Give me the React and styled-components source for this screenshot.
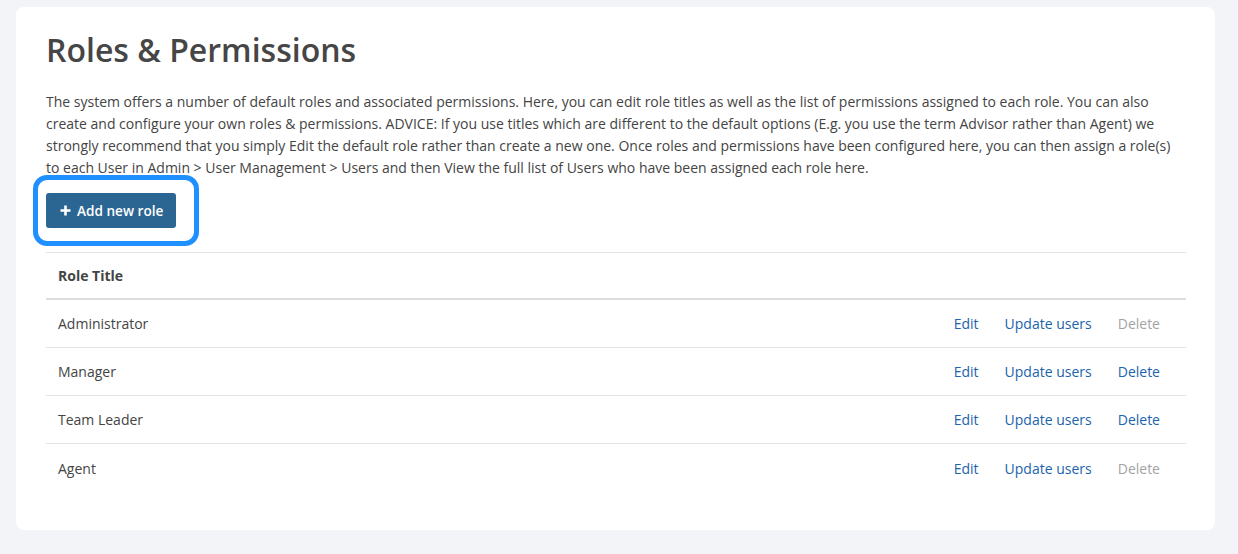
import React from "react";
import styled, { createGlobalStyle } from "styled-components";

const Global = createGlobalStyle`
  html, body { margin: 0; padding: 0; background: #f3f4f8; }
  body { font-family: "Open Sans", "Liberation Sans", sans-serif; color: #444; }
  * { box-sizing: border-box; }
`;

const Page = styled.div`
  padding: 7px 23px 24px 16px;
`;

const Card = styled.div`
  background: #fff;
  border-radius: 8px;
  padding: 24px 29px 38px 30px;
`;

const Title = styled.h1`
  margin: 0;
  font-size: 32px;
  font-weight: 600;
  color: #464646;
  line-height: 38px;
`;

const Intro = styled.p`
  margin: 22px 0 0;
  font-size: 14px;
  line-height: 22px;
  color: #444;
  padding-right: 10px;
`;

const ButtonWrap = styled.div`
  position: relative;
  display: inline-block;
  margin-top: 14px;
`;

const Highlight = styled.span`
  position: absolute;
  left: -13px;
  top: -18px;
  right: -23px;
  bottom: -18px;
  border: 5px solid #1e90ff;
  border-radius: 14px;
  pointer-events: none;
`;

const PrimaryButton = styled.button`
  display: flex;
  align-items: center;
  gap: 6px;
  height: 35px;
  padding: 0 13px 0 14px;
  background: #2b6592;
  color: #fff;
  border: none;
  border-radius: 3px;
  font-family: inherit;
  font-size: 13.6px;
  font-weight: 600;
  cursor: pointer;
`;

const Table = styled.div`
  margin-top: 24px;
  border-top: 1px solid #e2e2e2;
`;

const HeaderRow = styled.div`
  display: flex;
  align-items: center;
  height: 47px;
  padding: 0 12px;
  border-bottom: 2px solid #dddddd;
  font-size: 14px;
  font-weight: 700;
  color: #444;
`;

const Row = styled.div`
  display: flex;
  align-items: center;
  height: 48px;
  padding: 0 26px 0 12px;
  border-bottom: ${(p) => (p.$last ? "none" : "1px solid #e2e2e2")};
  font-size: 14px;
  color: #444;
`;

const Name = styled.div`
  flex: 1;
`;

const Actions = styled.div`
  display: flex;
  gap: 26px;
`;

const Action = styled.a`
  color: ${(p) => (p.$disabled ? "#a3a3a3" : "#1b63ad")};
  text-decoration: none;
  cursor: ${(p) => (p.$disabled ? "default" : "pointer")};
`;

const PlusIcon = () => (
  <svg width="11" height="11" viewBox="0 0 11 11" aria-hidden="true">
    <path d="M5.5 0.5v10M0.5 5.5h10" stroke="#fff" strokeWidth="2.6" />
  </svg>
);

const roles = [
  { name: "Administrator", canDelete: false },
  { name: "Manager", canDelete: true },
  { name: "Team Leader", canDelete: true },
  { name: "Agent", canDelete: false },
];

export default function App() {
  return (
    <>
      <Global />
      <Page>
        <Card>
          <Title>Roles &amp; Permissions</Title>
          <Intro>
            The system offers a number of default roles and associated permissions. Here, you can edit role titles as well as the list of permissions assigned to each role. You can also create and configure your own roles &amp; permissions. ADVICE: If you use titles which are different to the default options (E.g. you use the term Advisor rather than Agent) we strongly recommend that you simply Edit the default role rather than create a new one. Once roles and permissions have been configured here, you can then assign a role(s) to each User in Admin &gt; User Management &gt; Users and then View the full list of Users who have been assigned each role here.
          </Intro>
          <ButtonWrap>
            <PrimaryButton>
              <PlusIcon />
              Add new role
            </PrimaryButton>
            <Highlight />
          </ButtonWrap>
          <Table>
            <HeaderRow>Role Title</HeaderRow>
            {roles.map((r, i) => (
              <Row key={r.name} $last={i === roles.length - 1}>
                <Name>{r.name}</Name>
                <Actions>
                  <Action>Edit</Action>
                  <Action>Update users</Action>
                  <Action $disabled={!r.canDelete}>Delete</Action>
                </Actions>
              </Row>
            ))}
          </Table>
        </Card>
      </Page>
    </>
  );
}
